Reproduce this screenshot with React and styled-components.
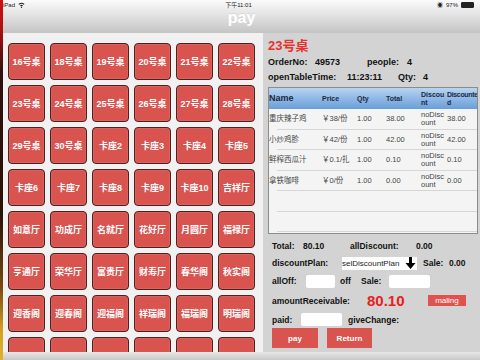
import React from "react";
import styled, { createGlobalStyle } from "styled-components";

const Global = createGlobalStyle`
  html, body { margin: 0; padding: 0; }
  body { font-family: "Liberation Sans", "Noto Sans CJK SC", sans-serif; }
`;

const Screen = styled.div`
  width: 480px;
  height: 360px;
  display: flex;
  overflow: hidden;
  background: #222;
`;

const EdgeStrip = styled.div`
  width: 3px;
  flex: none;
  background: linear-gradient(180deg, #d01010 0%, #b01010 8%, #301010 20%, #2a1208 60%, #7a4a10 80%, #d8a020 92%, #e0b030 100%);
`;

const Main = styled.div`
  flex: 1;
  display: flex;
  flex-direction: column;
  min-width: 0;
`;

const Header = styled.div`
  height: 33px;
  flex: none;
  background: linear-gradient(180deg, #fafafa 0%, #e6e6e6 40%, #c4c4c4 100%);
  display: flex;
  flex-direction: column;
`;

const StatusBar = styled.div`
  height: 10px;
  display: grid;
  grid-template-columns: 1fr auto 1fr;
  align-items: center;
  font-size: 6px;
  color: #222;
  padding: 0 6px 0 0;
`;

const StatusLeft = styled.div`
  display: flex;
  align-items: center;
  gap: 3px;
`;

const StatusRight = styled.div`
  display: flex;
  align-items: center;
  justify-content: flex-end;
  gap: 3px;
`;

const Battery = styled.span`
  display: inline-block;
  width: 11px;
  height: 4px;
  border: 1px solid #222;
  background: #222;
  border-radius: 1px;
`;

const Title = styled.div`
  flex: 1;
  display: flex;
  align-items: center;
  justify-content: center;
  color: #fff;
  font-weight: bold;
  font-size: 16px;
  padding-bottom: 8px;
  text-shadow: 0 -1px 0 rgba(0,0,0,0.08);
`;

const Body = styled.div`
  flex: 1;
  display: flex;
  min-height: 0;
`;

const GridPanel = styled.div`
  width: 260px;
  flex: none;
  background: #f1f1f1;
  padding: 10px 0 0 5px;
  box-sizing: border-box;
  overflow: hidden;
`;

const TableGrid = styled.div`
  display: grid;
  grid-template-columns: repeat(6, 37px);
  grid-auto-rows: 37px;
  gap: 5px;
`;

const TableButton = styled.div`
  background: #d9534f;
  border: 1px solid #4a2222;
  border-radius: 4px;
  box-sizing: border-box;
  color: #fff;
  font-size: 9px;
  font-weight: bold;
  display: flex;
  align-items: center;
  justify-content: center;
  white-space: nowrap;
  box-shadow: inset 0 0 0 1px rgba(255,255,255,0.08);
`;

const RightPanel = styled.div`
  flex: 1;
  background: #d3d3d3;
  padding: 5px 2px 0 5px;
  box-sizing: border-box;
  display: flex;
  flex-direction: column;
  min-width: 0;
`;

const TableName = styled.div`
  color: #e8302c;
  font-size: 13px;
  font-weight: bold;
  height: 16px;
  line-height: 16px;
`;

const InfoRow = styled.div`
  display: flex;
  align-items: center;
  height: 15px;
  font-size: 9px;
  font-weight: bold;
  color: #111;
`;

const Cell = styled.span`
  width: ${p => (p.$w ? `${p.$w}px` : "auto")};
  flex: none;
  white-space: nowrap;
  color: ${p => p.$color || "inherit"};
  font-size: ${p => (p.$size ? `${p.$size}px` : "inherit")};
`;

const OrderTable = styled.div`
  margin-top: 3px;
  border: 1px solid #8c8c8c;
  height: 147px;
  box-sizing: border-box;
  background: #f4f4f4;
  overflow: hidden;
`;

const HeadRow = styled.div`
  display: grid;
  grid-template-columns: 53px 35px 29px 35px 26px 1fr;
  height: 21px;
  align-items: center;
  background: linear-gradient(180deg, #b8d4f2 0%, #8fb8e6 50%, #6a9ed8 100%);
  font-weight: bold;
  color: #1a2a40;
`;

const HeadCell = styled.span`
  font-size: ${p => (p.$big ? "9px" : "7px")};
  line-height: ${p => (p.$big ? "11px" : "8px")};
  white-space: ${p => (p.$wrap ? "normal" : "nowrap")};
  word-break: break-all;
  letter-spacing: ${p => (p.$tight ? "-0.35px" : "0")};
  width: ${p => (p.$wrap ? `${p.$wrap}px` : "auto")};
`;

const DataRow = styled.div`
  display: grid;
  grid-template-columns: 53px 35px 29px 35px 26px 1fr;
  height: 20.5px;
  align-items: center;
  font-size: 7.5px;
  color: #444;
  position: relative;
  &::after {
    content: "";
    position: absolute;
    left: 8px;
    right: 0;
    bottom: 0;
    height: 1px;
    background: #d6d6d6;
  }
`;

const DataCell = styled.span`
  white-space: ${p => (p.$wrap ? "normal" : "nowrap")};
  word-break: break-all;
  line-height: 8px;
  width: ${p => (p.$wrap ? "24px" : "auto")};
`;

const Summary = styled.div`
  display: flex;
  flex-direction: column;
  padding-left: 4px;
  margin-top: 3px;
`;

const SumRow = styled.div`
  display: flex;
  align-items: center;
  height: ${p => p.$h || 18}px;
  font-size: 8.5px;
  font-weight: bold;
  color: #111;
`;

const Select = styled.div`
  width: 62px;
  height: 13px;
  background: #fff;
  display: flex;
  align-items: center;
  font-size: 8px;
  font-weight: normal;
  color: #222;
  overflow: hidden;
  white-space: nowrap;
  flex: none;
`;

const ArrowBox = styled.div`
  width: 13px;
  height: 13px;
  background: #fff;
  display: flex;
  align-items: center;
  justify-content: center;
  margin-right: 6px;
  flex: none;
`;

const Input = styled.div`
  width: ${p => p.$w}px;
  height: 13px;
  background: #fff;
  border-radius: 2px;
  margin-right: ${p => p.$mr || 0}px;
  flex: none;
`;

const SmallRedButton = styled.div`
  width: 38px;
  height: 11px;
  background: #e0524e;
  color: #fff;
  font-size: 8px;
  font-weight: normal;
  display: flex;
  align-items: center;
  justify-content: center;
`;

const ActionRow = styled.div`
  display: flex;
  gap: 9px;
`;

const ActionButton = styled.div`
  width: ${p => p.$w}px;
  height: 20px;
  background: #d9534f;
  color: #fff;
  font-size: 8px;
  font-weight: bold;
  display: flex;
  align-items: center;
  justify-content: center;
`;

const BottomBar = styled.div`
  height: 8px;
  flex: none;
  background: linear-gradient(180deg, #e8e8e8 0%, #c8c8c8 100%);
`;

const tables = [
  "16号桌", "18号桌", "19号桌", "20号桌", "21号桌", "22号桌",
  "23号桌", "24号桌", "25号桌", "26号桌", "27号桌", "28号桌",
  "29号桌", "30号桌", "卡座2", "卡座3", "卡座4", "卡座5",
  "卡座6", "卡座7", "卡座8", "卡座9", "卡座10", "吉祥厅",
  "如意厅", "功成厅", "名就厅", "花好厅", "月圆厅", "福禄厅",
  "亨通厅", "荣华厅", "富贵厅", "财寿厅", "春华阁", "秋实阁",
  "迎香阁", "迎春阁", "迎福阁", "祥瑞阁", "福瑞阁", "明瑞阁",
  "", "", "", "", "", "",
];

const items = [
  ["重庆辣子鸡", "￥38/份", "1.00", "38.00", "38.00"],
  ["小炒鸡胗", "￥42/份", "1.00", "42.00", "42.00"],
  ["鲜榨西瓜汁", "￥0.1/扎", "1.00", "0.10", "0.10"],
  ["拿铁咖啡", "￥0/份", "1.00", "0.00", "0.00"],
];

function Wifi() {
  return (
    <svg width="7" height="6" viewBox="0 0 14 12">
      <path d="M1 4 Q7 -1 13 4 L11.5 5.5 Q7 1.8 2.5 5.5 Z" fill="#222" />
      <path d="M4 7 Q7 4.2 10 7 L8.5 8.5 Q7 7.3 5.5 8.5 Z" fill="#222" />
      <circle cx="7" cy="10.5" r="1.3" fill="#222" />
    </svg>
  );
}

function DownArrow() {
  return (
    <svg width="11" height="12" viewBox="0 0 11 12">
      <path d="M4 0 H7 V6 H10.5 L5.5 12 L0.5 6 H4 Z" fill="#000" />
    </svg>
  );
}

export default function App() {
  return (
    <>
      <Global />
      <Screen>
        <EdgeStrip />
        <Main>
          <Header>
            <StatusBar>
              <StatusLeft>
                <span>iPad</span>
                <Wifi />
              </StatusLeft>
              <span>下午11:01</span>
              <StatusRight>
                <span>◉</span>
                <span>97%</span>
                <Battery />
              </StatusRight>
            </StatusBar>
            <Title>pay</Title>
          </Header>
          <Body>
            <GridPanel>
              <TableGrid>
                {tables.map((t, i) => (
                  <TableButton key={i}>{t}</TableButton>
                ))}
              </TableGrid>
            </GridPanel>
            <RightPanel>
              <TableName>23号桌</TableName>
              <InfoRow>
                <Cell $w={47}>OrderNo:</Cell>
                <Cell $w={52}>49573</Cell>
                <Cell $w={40}>people:</Cell>
                <Cell>4</Cell>
              </InfoRow>
              <InfoRow>
                <Cell $w={79}>openTableTime:</Cell>
                <Cell $w={51}>11:23:11</Cell>
                <Cell $w={25}>Qty:</Cell>
                <Cell>4</Cell>
              </InfoRow>
              <OrderTable>
                <HeadRow>
                  <HeadCell $big>Name</HeadCell>
                  <HeadCell>Price</HeadCell>
                  <HeadCell>Qty</HeadCell>
                  <HeadCell>Total</HeadCell>
                  <HeadCell $wrap={24}>Discount</HeadCell>
                  <HeadCell $wrap={31} $tight>Discounted</HeadCell>
                </HeadRow>
                {items.map((r, i) => (
                  <DataRow key={i}>
                    <DataCell>{r[0]}</DataCell>
                    <DataCell>{r[1]}</DataCell>
                    <DataCell>{r[2]}</DataCell>
                    <DataCell>{r[3]}</DataCell>
                    <DataCell $wrap>noDiscount</DataCell>
                    <DataCell>{r[4]}</DataCell>
                  </DataRow>
                ))}
                <DataRow />
                <DataRow />
              </OrderTable>
              <Summary>
                <SumRow $h={17}>
                  <Cell $w={31}>Total:</Cell>
                  <Cell $w={47}>80.10</Cell>
                  <Cell $w={66}>allDiscount:</Cell>
                  <Cell>0.00</Cell>
                </SumRow>
                <SumRow $h={18}>
                  <Cell $w={70}>discountPlan:</Cell>
                  <Select>selDiscountPlan</Select>
                  <ArrowBox>
                    <DownArrow />
                  </ArrowBox>
                  <Cell $w={26}>Sale:</Cell>
                  <Cell>0.00</Cell>
                </SumRow>
                <SumRow $h={18}>
                  <Cell $w={34}>allOff:</Cell>
                  <Input $w={29} $mr={5} />
                  <Cell $w={21}>off</Cell>
                  <Cell $w={28}>Sale:</Cell>
                  <Input $w={41} />
                </SumRow>
                <SumRow $h={21}>
                  <Cell $w={95}>amountReceivable:</Cell>
                  <Cell $w={61} $color="#e8201c" $size={15}>80.10</Cell>
                  <SmallRedButton>maling</SmallRedButton>
                </SumRow>
                <SumRow $h={17}>
                  <Cell $w={29}>paid:</Cell>
                  <Input $w={41} $mr={6} />
                  <Cell>giveChange:</Cell>
                </SumRow>
                <ActionRow>
                  <ActionButton $w={46}>pay</ActionButton>
                  <ActionButton $w={45}>Return</ActionButton>
                </ActionRow>
              </Summary>
            </RightPanel>
          </Body>
          <BottomBar />
        </Main>
      </Screen>
    </>
  );
}
